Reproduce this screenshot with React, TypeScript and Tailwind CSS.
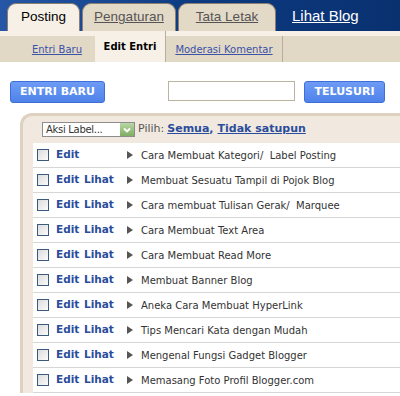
const posts = [
  { title: 'Cara Membuat Kategori/  Label Posting', lihat: false },
  { title: 'Membuat Sesuatu Tampil di Pojok Blog', lihat: true },
  { title: 'Cara membuat Tulisan Gerak/  Marquee', lihat: true },
  { title: 'Cara Membuat Text Area', lihat: true },
  { title: 'Cara Membuat Read More', lihat: true },
  { title: 'Membuat Banner Blog', lihat: true },
  { title: 'Aneka Cara Membuat HyperLink', lihat: true },
  { title: 'Tips Mencari Kata dengan Mudah', lihat: true },
  { title: 'Mengenal Fungsi Gadget Blogger', lihat: true },
  { title: 'Memasang Foto Profil Blogger.com', lihat: true },
];

const tahoma = "font-['DejaVu_Sans',sans-serif]";

// tab atas
const Tab = ({ label, active }: { label: string; active?: boolean }) => (
  <div
    className={`h-[28px] flex items-center justify-center rounded-t-[9px] border border-b-0 border-[#8a7f70] ${
      active ? 'bg-[#f7f0e6] text-black' : 'bg-[#e3d9c7] text-[#555] underline'
    }`}
  >
    <span className="text-[13.5px]">{label}</span>
  </div>
);

const Checkbox = () => (
  <div className="w-[12px] h-[12px] border border-[#3b5a7c] bg-gradient-to-br from-[#dcdcdc] to-[#fbfbfb]" />
);

export default function App() {
  return (
    <div className="w-[400px] h-[396px] overflow-hidden bg-white font-['Liberation_Sans',sans-serif]">
      {/* bar biru atas */}
      <div className="h-[31px] bg-gradient-to-r from-[#2557a6] via-[#0c3a80] to-[#093170] flex items-end pl-[7px] gap-[2px]">
        <div className="w-[73px]"><Tab label="Posting" active /></div>
        <div className="w-[94px]"><Tab label="Pengaturan" /></div>
        <div className="w-[98px]"><Tab label="Tata Letak" /></div>
        <div className="self-center pl-[14px] pt-[2px] text-white underline text-[15px]">Lihat Blog</div>
      </div>

      {/* sub navigasi */}
      <div className="h-[5px] bg-[#f7f0e6]" />
      <div className={`h-[26px] bg-[#e2d8c6] flex text-[10px] ${tahoma}`}>
        <div className="w-[95px] flex items-center justify-end pr-[13px] text-[#3a52a8] underline">Entri Baru</div>
        <div className="w-[71px] -mt-[5px] h-[31px] bg-[#f7f0e6] flex items-center justify-center font-bold text-black border-r border-[#b8ad9c]">
          Edit Entri
        </div>
        <div className="w-[117px] flex items-center justify-center text-[#3a52a8] underline border-r border-[#b8ad9c]">
          Moderasi Komentar
        </div>
      </div>

      {/* tombol dan cari */}
      <div className={`flex items-start pt-[19px] pl-[10px] ${tahoma}`}>
        <button className="w-[95px] h-[22px] rounded-[3px] border border-[#3d6fd6] bg-gradient-to-b from-[#6d9bf5] to-[#4f82ea] text-white text-[11px] font-bold">
          ENTRI BARU
        </button>
        <div className="ml-[63px] w-[127px] h-[20px] border border-[#b9b39f] bg-white" />
        <button className="ml-[9px] w-[81px] h-[22px] rounded-[3px] border border-[#3d6fd6] bg-gradient-to-b from-[#6d9bf5] to-[#4f82ea] text-white text-[11px] font-bold">
          TELUSURI
        </button>
      </div>

      {/* panel daftar entri */}
      <div className={`mt-[10px] ml-[20px] rounded-tl-[12px] border-t-[3px] border-l-[3px] border-[#ddd1bf] bg-[#f1e9df] pl-[10px] ${tahoma}`}>
        <div className="h-[27px] flex items-center pl-[9px] text-[11px]">
          <div className="w-[93px] h-[15px] border border-[#8d8d8d] bg-white flex items-center">
            <span className="flex-1 pl-[3px] text-[10px] text-[#333] tracking-[-0.3px]">Aksi Label...</span>
            <div className="w-[14px] h-[13px] bg-gradient-to-b from-[#b9d7a4] to-[#7fae63] flex items-center justify-center">
              <svg width="8" height="6" viewBox="0 0 8 6">
                <path d="M1 1.5 L4 4.5 L7 1.5" stroke="#fff" strokeWidth="1.8" fill="none" />
              </svg>
            </div>
          </div>
          <span className="ml-[3px] text-[#555]">Pilih:</span>
          <span className="ml-[3px] font-bold text-[#2a4d9c] underline">Semua</span>
          <span className="text-[#2a4d9c] font-bold">,</span>
          <span className="ml-[4px] font-bold text-[#2a4d9c] underline">Tidak satupun</span>
        </div>
        <div className="bg-white">
          {posts.map((p) => (
            <div key={p.title} className="h-[25px] flex items-center border-b border-[#d6d6d6]">
              <div className="pl-[4px]"><Checkbox /></div>
              <span className="ml-[7px] w-[28px] text-[10.5px] font-bold text-[#2a4d9c]">Edit</span>
              <span className="w-[43px] text-[10.5px] font-bold text-[#2a4d9c]">{p.lihat ? 'Lihat' : ''}</span>
              <svg width="6" height="8" viewBox="0 0 6 8" className="shrink-0">
                <path d="M0 0 L6 4 L0 8 Z" fill="#555" />
              </svg>
              <span className="ml-[8px] text-[10px] text-[#333] whitespace-pre">{p.title}</span>
            </div>
          ))}
        </div>
      </div>
    </div>
  );
}
